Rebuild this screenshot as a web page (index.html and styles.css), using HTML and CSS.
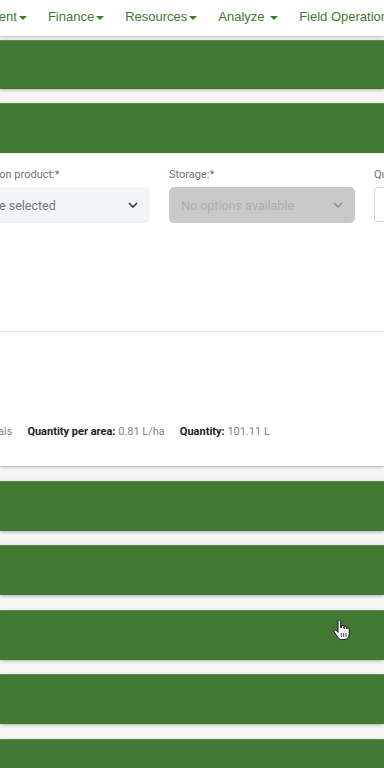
FILE: index.html
```html
<!DOCTYPE html>
<html>
    <head>
        <meta http-equiv="Content-Type" content="text/html; charset=utf-8;" />
        <title>Field Operations</title>
        <link rel="stylesheet" href="styles.css">
    </head>

    <body>
        <div class="topnav">
            <ul class="menu">
                <li>Management<i class="caret"></i></li>
                <li>Finance<i class="caret"></i></li>
                <li>Resources<i class="caret"></i></li>
                <li>Analyze <i class="caret"></i></li>
                <li>Field Operations<i class="caret"></i></li>
            </ul>
        </div>

        <div class="panels">
            <div class="panel first"><div class="panel-head"></div></div>
            <div class="panel">
                <div class="panel-head"></div>
                <div class="panel-body">
                    <div class="fields">
                        <div class="field">
                            <label class="long">Protection product:*</label>
                            <div class="select">
                                <span>None selected</span>
                                <svg width="10" height="6" viewBox="0 0 10 6"><polyline points="1,1 5,5 9,1" fill="none" stroke="#333" stroke-width="1.6" /></svg>
                            </div>
                        </div>
                        <div class="field">
                            <label>Storage:*</label>
                            <div class="select disabled">
                                <span>No options available</span>
                                <svg width="10" height="6" viewBox="0 0 10 6"><polyline points="1,1 5,5 9,1" fill="none" stroke="#8c8c8c" stroke-width="1.4" /></svg>
                            </div>
                        </div>
                        <div class="field">
                            <label>Quantity:*</label>
                            <div class="input"></div>
                        </div>
                    </div>
                    <div class="summary">
                        <span><b>Type:</b> Chemicals</span>
                        <span><b>Quantity per area:</b> 0.81 L/ha</span>
                        <span><b>Quantity:</b> 101.11 L</span>
                    </div>
                </div>
            </div>
            <div class="panel"><div class="panel-head"></div></div>
            <div class="panel"><div class="panel-head"></div></div>
            <div class="panel"><div class="panel-head"></div></div>
            <div class="panel"><div class="panel-head"></div></div>
            <div class="panel"><div class="panel-head"></div></div>
        </div>

        <!-- mouse pointer caught in the screenshot -->
        <svg class="pointer" width="17" height="23" viewBox="0 0 17 23">
            <path d="M5 1.6c0-.8.6-1.4 1.4-1.4s1.4.6 1.4 1.4V8h.5V6.7c0-.8.6-1.3 1.3-1.3s1.3.5 1.3 1.3v1.8h.4V7.6c0-.7.6-1.2 1.2-1.2s1.2.5 1.2 1.2v1.3h.3c0-.7.5-1.1 1.1-1.1s1.1.5 1.1 1.1V14c0 3.2-2 5.6-5 5.6H8.8c-1.8 0-3-.9-4-2.3L1.2 12.1c-.5-.7-.3-1.5.3-1.9.6-.4 1.4-.3 1.9.3L5 12.4V1.6z" fill="#fff" stroke="#111" stroke-width="1" />
            <path d="M8.3 13v4M10.7 13v4M13 13v4" stroke="#111" stroke-width=".8" />
        </svg>
    </body>
</html>
```

FILE: styles.css
```css
* {
    margin: 0;
    padding: 0;
    box-sizing: border-box;
}
html, body {
    width: 384px;
    height: 768px;
    overflow: hidden;
}
body {
    position: relative;
    background: #f6f6f6;
    font-family: Roboto, "Liberation Sans", sans-serif;
}
li {
    list-style: none;
}

/* top navigation (page is scrolled sideways) */
.topnav {
    height: 36px;
    background: #fff;
    box-shadow: 0 1px 3px rgba(0, 0, 0, 0.25);
    position: relative;
    z-index: 2;
}
.menu {
    display: flex;
    margin-left: -59px;
    white-space: nowrap;
    font-family: "Liberation Sans", Arial, sans-serif;
    font-size: 13px;
    line-height: 34px;
    color: #3f7a2f;
}
.menu li {
    margin-right: 21px;
}
.caret {
    display: inline-block;
    margin-left: 2px;
    vertical-align: middle;
    border-top: 4px solid #3f7a2f;
    border-left: 4px solid transparent;
    border-right: 4px solid transparent;
}

/* collapsible panels */
.panels {
    padding-top: 4px;
}
.panel {
    margin-bottom: 14.5px;
    box-shadow: 0 1px 3px rgba(0, 0, 0, 0.3);
}
.panel.first {
    margin-bottom: 14px;
}
.panel.first .panel-head {
    height: 49px;
}
.panel-head {
    height: 50px;
    background: #417933;
    border-top: 1px solid #5d8a50;
}
.panel-body {
    background: #fff;
}

.fields {
    display: flex;
    gap: 19px;
    height: 178px;
    margin-left: -36px;
    padding-top: 15px;
}
.field {
    flex: 0 0 186px;
}
.field label {
    display: block;
    font-size: 11px;
    line-height: 14px;
    color: #6a737b;
    margin-bottom: 5px;
    white-space: nowrap;
}
.field label.long {
    text-indent: -3px;
}
.select {
    display: flex;
    align-items: center;
    justify-content: space-between;
    height: 36px;
    padding: 0 12px 0 12px;
    background: #f1f3f4;
    border-radius: 5px;
    font-size: 12.5px;
    color: #6b7a88;
}
.select.disabled {
    background: #c9c9c9;
    color: #a9b0b0;
}
.input {
    height: 35px;
    background: #fff;
    border: 1px solid #cfd4d8;
    border-radius: 4px;
}

.summary {
    display: flex;
    gap: 15px;
    margin-left: -69px;
    padding: 92px 0 26px;
    border-top: 1px solid #e2e2e2;
    font-size: 11px;
    line-height: 16px;
    color: #7c868c;
    white-space: nowrap;
}
.summary b {
    font-weight: 700;
    color: #222;
}

.pointer {
    position: absolute;
    left: 333px;
    top: 620px;
}
```
